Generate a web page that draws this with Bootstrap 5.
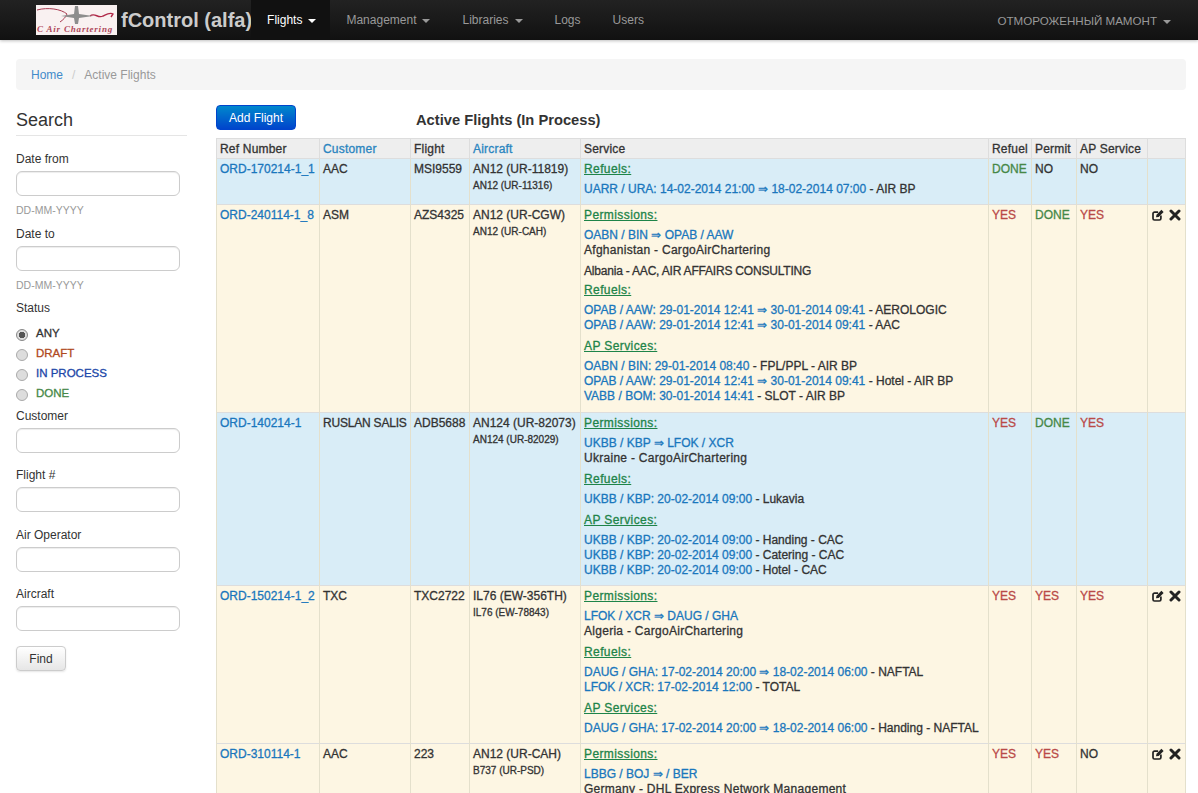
<!DOCTYPE html>
<html lang="en">
<head>
    <meta charset="UTF-8">
    <meta name="viewport" content="width=device-width, initial-scale=1.0">
    <title>fControl (alfa) - Active Flights</title>
    <link href="https://cdn.jsdelivr.net/npm/bootstrap@5.3.3/dist/css/bootstrap.min.css" rel="stylesheet">
    <style>
        html, body { height: 793px; overflow: hidden; }
        body { font-family: "Liberation Sans", Arial, sans-serif; font-size: 12px; line-height: 15px; color: #333; background: #fff; }

        /* top bar */
        .top-bar { height: 40px; padding: 0 11px 0 36px; background: linear-gradient(#222, #111); box-shadow: 0 1px 3px rgba(0,0,0,.25); flex-wrap: nowrap; --bs-navbar-nav-link-padding-x: 16px; }
        .top-bar .navbar-brand { margin: 0 -1px 0 0; padding: 0; font-size: 20px; line-height: 24px; font-weight: 700; color: #ccc; display: flex; align-items: center; }
        .brand-logo { width: 81px; height: 30px; margin-right: 4px; display: block; }
        .top-bar .nav-link { height: 40px; padding-top: 13px; padding-bottom: 0; font-size: 12px; line-height: 15px; color: #999; }
        .top-bar .navbar-nav .nav-link.active { color: #fff; background: #111; padding-right: 14px; }
        .top-bar .dropdown-toggle::after { margin-left: 6px; vertical-align: 1px; border-top-width: 4px; border-left-width: 4px; border-right-width: 4px; }
        .user-link { font-size: 11.6px !important; }

        /* breadcrumb */
        .crumbs { margin: 19px 12px 15px 16px; padding: 9px 15px 7px; height: 31px; background: #f5f5f5; border-radius: 4px; --bs-breadcrumb-divider-color: #ccc; --bs-breadcrumb-item-active-color: #999; --bs-breadcrumb-item-padding-x: 9px; }
        .crumbs a { color: #428bca; text-decoration: none; }

        /* search column */
        .search-col { width: 216px; flex: none; padding-left: 16px; }
        .search-title { width: 171px; margin: 5px 0 16px; padding-bottom: 5px; height: 26px; font-size: 18px; line-height: 20px; font-weight: 400; border-bottom: 1px solid #e5e5e5; }
        .search-col .form-label { display: block; margin-bottom: 4px; }
        .search-col .form-control { width: 164px; height: 25px; min-height: 0; padding: 2px 6px; font-size: 12px; border-color: #ccc; box-shadow: inset 0 1px 1px rgba(0,0,0,.075); margin-bottom: 15px; }
        .search-col .form-control.date-input { margin-bottom: 7px; }
        .search-col .form-control.wide-gap { margin-bottom: 16px; }
        .search-hint { display: block; margin-bottom: 9px; font-size: 10.5px; color: #999; }
        .status-label { margin-top: -1px; }
        .status-list { margin: 7px 0 0; }
        .status-item { display: flex; align-items: center; height: 20px; padding: 0; margin: 0; min-height: 0; font-size: 11.5px; -webkit-text-stroke: .3px; }
        .status-item .form-check-input { width: 12px; height: 12px; margin: 3px 8px 0 0; float: none; flex: none; border-color: #aaa; background-color: #ddd; }
        .status-item .form-check-input:checked { background-color: #ddd; border-color: #888; background-image: radial-gradient(circle, #555 0, #555 3px, transparent 3.5px); }
        .status-any { color: #333; }
        .status-draft { color: #b0491e; }
        .status-process { color: #1c47a8; }
        .status-done { color: #468847; }
        .customer-label { margin-top: 6px; }
        .find-btn { display: block; width: 50px; height: 25px; padding: 0; font-size: 12px; color: #333; border: 1px solid #ccc; border-radius: 4px; background: linear-gradient(#fff, #e6e6e6); box-shadow: 0 1px 2px rgba(0,0,0,.1); }

        /* flights table */
        .flights-col { width: 970px; flex: none; }
        .add-btn { width: 80px; height: 25px; padding: 0; font-size: 12px; color: #fff; border: 1px solid #0044cc; border-radius: 4px; background: linear-gradient(#0088cc, #0044cc); }
        .flights-title { margin: 5px 0 0 120px; font-size: 14.7px; line-height: 20px; font-weight: 700; }
        .title-row { height: 33px; }
        .flights-table { table-layout: fixed; width: 969px; margin: 0; font-size: 12px; line-height: 15px; --bs-table-border-color: #ddd; color: #333; border-collapse: collapse; -webkit-text-stroke: .3px; }
        .flights-table > thead > tr > th { padding: 3px 3px 1px; height: 20px; font-weight: 400; letter-spacing: .2px; background: #eee; color: #333; border-color: #ddd; white-space: nowrap; }
        .flights-table > tbody > tr > td { padding: 3px 3px 1px; color: #333; border-color: #e4e0cc; white-space: nowrap; }
        .flights-table a { color: #1a77bd; text-decoration: none; }
        .flights-table th a { color: #2a85c0; }
        .col-ref { width: 103px; }
        .col-customer { width: 91px; }
        .col-flight { width: 59px; }
        .col-aircraft { width: 111px; }
        .col-service { width: 408px; }
        .col-refuel { width: 43px; }
        .col-permit { width: 45px; }
        .col-ap { width: 71px; }
        .col-actions { width: 38px; }
        .row-blue > td { background-color: #d9edf7 !important; }
        .row-cream > td { background-color: #fdf6e3 !important; }
        .plane-small { display: block; margin-top: 2px; font-size: 10px; line-height: 13px; }
        .service-head { margin-bottom: 5px; color: #1e8449; text-decoration: underline; letter-spacing: .4px; }
        .service-group { margin-bottom: 6px; }
        .service-group.tight { margin-bottom: 4px; }
        .service-group.loose { margin-bottom: 7px; }
        .route { color: #1a77bd; }
        .text-wide { letter-spacing: .28px; }
        .text-caps { letter-spacing: -.2px; }
        .st-yes { color: #b94a48 !important; }
        .st-done { color: #468847 !important; }
        .row-icons { display: flex; gap: 5px; padding: 1px 0 0 1px; }
        .row-icons svg { display: block; width: 12px; height: 12px; }
    </style>
</head>
<body>
    <nav class="navbar navbar-expand top-bar">
        <a class="navbar-brand" href="#">
            <svg class="brand-logo" viewBox="0 0 81 30">
                <rect width="81" height="30" fill="#f9f1f1"/>
                <path d="M1 5 C12 2 25 4 31 9 C30 12 27 15 24 17" fill="none" stroke="#a83a50" stroke-width="1"/>
                <path d="M54 11 C59 7 62 14 67 11 C71 9 74 7 77 9 L75 12" fill="none" stroke="#b02848" stroke-width="1.4"/>
                <path d="M39 1 L42 1 L43 9 L57 11 L43 13 L42 19 L39 19 L38 13 L25 11 L38 9 Z" fill="#8d8d8d"/>
                <text x="1" y="27" font-family="Liberation Serif, serif" font-style="italic" font-weight="700" font-size="9" letter-spacing=".8" fill="#b0475a">C Air Chartering</text>
            </svg>
            fControl (alfa)
        </a>
        <ul class="navbar-nav">
            <li class="nav-item dropdown"><a class="nav-link active dropdown-toggle" href="#">Flights</a></li>
            <li class="nav-item dropdown"><a class="nav-link dropdown-toggle" href="#">Management</a></li>
            <li class="nav-item dropdown"><a class="nav-link dropdown-toggle" href="#">Libraries</a></li>
            <li class="nav-item"><a class="nav-link" href="#">Logs</a></li>
            <li class="nav-item"><a class="nav-link" href="#">Users</a></li>
        </ul>
        <ul class="navbar-nav ms-auto">
            <li class="nav-item dropdown"><a class="nav-link dropdown-toggle user-link" href="#">ОТМОРОЖЕННЫЙ МАМОНТ</a></li>
        </ul>
    </nav>

    <ol class="breadcrumb crumbs">
        <li class="breadcrumb-item"><a href="#">Home</a></li>
        <li class="breadcrumb-item active">Active Flights</li>
    </ol>

    <div class="d-flex">
        <form class="search-col">
            <h5 class="search-title">Search</h5>
            <label class="form-label">Date from</label>
            <input type="text" class="form-control date-input">
            <span class="search-hint">DD-MM-YYYY</span>
            <label class="form-label">Date to</label>
            <input type="text" class="form-control date-input">
            <span class="search-hint">DD-MM-YYYY</span>
            <label class="form-label status-label mb-0">Status</label>
            <div class="status-list">
                <label class="form-check status-item status-any"><input class="form-check-input" type="radio" name="status" checked>ANY</label>
                <label class="form-check status-item status-draft"><input class="form-check-input" type="radio" name="status">DRAFT</label>
                <label class="form-check status-item status-process"><input class="form-check-input" type="radio" name="status">IN PROCESS</label>
                <label class="form-check status-item status-done"><input class="form-check-input" type="radio" name="status">DONE</label>
            </div>
            <label class="form-label customer-label">Customer</label>
            <input type="text" class="form-control">
            <label class="form-label">Flight #</label>
            <input type="text" class="form-control wide-gap">
            <label class="form-label">Air Operator</label>
            <input type="text" class="form-control">
            <label class="form-label">Aircraft</label>
            <input type="text" class="form-control">
            <button type="button" class="btn find-btn">Find</button>
        </form>

        <div class="flights-col">
            <div class="d-flex title-row">
                <button type="button" class="btn add-btn">Add Flight</button>
                <h5 class="flights-title">Active Flights (In Process)</h5>
            </div>
            <table class="table table-bordered flights-table">
                <colgroup>
                    <col class="col-ref"><col class="col-customer"><col class="col-flight"><col class="col-aircraft"><col class="col-service"><col class="col-refuel"><col class="col-permit"><col class="col-ap"><col class="col-actions">
                </colgroup>
                <thead>
                    <tr>
                        <th>Ref Number</th><th><a href="#">Customer</a></th><th>Flight</th><th><a href="#">Aircraft</a></th><th>Service</th><th>Refuel</th><th>Permit</th><th>AP Service</th><th></th>
                    </tr>
                </thead>
                <tbody>
                    <tr class="row-blue">
                        <td><a href="#">ORD-170214-1_1</a></td><td>AAC</td><td>MSI9559</td>
                        <td>AN12 (UR-11819)<span class="plane-small">AN12 (UR-11316)</span></td>
                        <td>
                            <div class="service-head">Refuels:</div>
                            <div class="service-group"><span class="route">UARR / URA: 14-02-2014 21:00 ⇒ 18-02-2014 07:00</span> - AIR BP</div>
                        </td>
                        <td class="st-done">DONE</td><td>NO</td><td>NO</td><td></td>
                    </tr>
                    <tr class="row-cream">
                        <td><a href="#">ORD-240114-1_8</a></td><td>ASM</td><td>AZS4325</td>
                        <td>AN12 (UR-CGW)<span class="plane-small">AN12 (UR-CAH)</span></td>
                        <td>
                            <div class="service-head">Permissions:</div>
                            <div class="service-group"><span class="route">OABN / BIN ⇒ OPAB / AAW</span><br><span class="text-wide">Afghanistan - CargoAirChartering</span></div>
                            <div class="service-group tight text-caps">Albania - AAC, AIR AFFAIRS CONSULTING</div>
                            <div class="service-head">Refuels:</div>
                            <div class="service-group"><span class="route">OPAB / AAW: 29-01-2014 12:41 ⇒ 30-01-2014 09:41</span> - AEROLOGIC<br><span class="route">OPAB / AAW: 29-01-2014 12:41 ⇒ 30-01-2014 09:41</span> - AAC</div>
                            <div class="service-head">AP Services:</div>
                            <div class="service-group loose"><span class="route">OABN / BIN: 29-01-2014 08:40</span> - FPL/PPL - AIR BP<br><span class="route">OPAB / AAW: 29-01-2014 12:41 ⇒ 30-01-2014 09:41</span> - Hotel - AIR BP<br><span class="route">VABB / BOM: 30-01-2014 14:41</span> - SLOT - AIR BP</div>
                        </td>
                        <td class="st-yes">YES</td><td class="st-done">DONE</td><td class="st-yes">YES</td>
                        <td>
                            <div class="row-icons">
                                <svg viewBox="0 0 12 12"><path d="M8.9 6.5v3a1.5 1.5 0 0 1-1.5 1.5H2.5A1.5 1.5 0 0 1 1 9.5V4.6a1.5 1.5 0 0 1 1.5-1.5h3.6" fill="none" stroke="#222" stroke-width="1.7"/><path d="M4.5 5.7 9.4.8 11.6 3 6.7 7.9 4 8.3Z" fill="#222"/></svg>
                                <svg viewBox="0 0 12 12"><path d="M2 2 10 10M10 2 2 10" stroke="#222" stroke-width="3" stroke-linecap="round"/></svg>
                            </div>
                        </td>
                    </tr>
                    <tr class="row-blue">
                        <td><a href="#">ORD-140214-1</a></td><td class="text-caps">RUSLAN SALIS</td><td>ADB5688</td>
                        <td>AN124 (UR-82073)<span class="plane-small">AN124 (UR-82029)</span></td>
                        <td>
                            <div class="service-head">Permissions:</div>
                            <div class="service-group"><span class="route">UKBB / KBP ⇒ LFOK / XCR</span><br><span class="text-wide">Ukraine - CargoAirChartering</span></div>
                            <div class="service-head">Refuels:</div>
                            <div class="service-group"><span class="route">UKBB / KBP: 20-02-2014 09:00</span> - Lukavia</div>
                            <div class="service-head">AP Services:</div>
                            <div class="service-group"><span class="route">UKBB / KBP: 20-02-2014 09:00</span> - Handing - CAC<br><span class="route">UKBB / KBP: 20-02-2014 09:00</span> - Catering - CAC<br><span class="route">UKBB / KBP: 20-02-2014 09:00</span> - Hotel - CAC</div>
                        </td>
                        <td class="st-yes">YES</td><td class="st-done">DONE</td><td class="st-yes">YES</td><td></td>
                    </tr>
                    <tr class="row-cream">
                        <td><a href="#">ORD-150214-1_2</a></td><td>TXC</td><td>TXC2722</td>
                        <td>IL76 (EW-356TH)<span class="plane-small">IL76 (EW-78843)</span></td>
                        <td>
                            <div class="service-head">Permissions:</div>
                            <div class="service-group"><span class="route">LFOK / XCR ⇒ DAUG / GHA</span><br><span class="text-wide">Algeria - CargoAirChartering</span></div>
                            <div class="service-head">Refuels:</div>
                            <div class="service-group"><span class="route">DAUG / GHA: 17-02-2014 20:00 ⇒ 18-02-2014 06:00</span> - NAFTAL<br><span class="route">LFOK / XCR: 17-02-2014 12:00</span> - TOTAL</div>
                            <div class="service-head">AP Services:</div>
                            <div class="service-group"><span class="route">DAUG / GHA: 17-02-2014 20:00 ⇒ 18-02-2014 06:00</span> - Handing - NAFTAL</div>
                        </td>
                        <td class="st-yes">YES</td><td class="st-yes">YES</td><td class="st-yes">YES</td>
                        <td>
                            <div class="row-icons">
                                <svg viewBox="0 0 12 12"><path d="M8.9 6.5v3a1.5 1.5 0 0 1-1.5 1.5H2.5A1.5 1.5 0 0 1 1 9.5V4.6a1.5 1.5 0 0 1 1.5-1.5h3.6" fill="none" stroke="#222" stroke-width="1.7"/><path d="M4.5 5.7 9.4.8 11.6 3 6.7 7.9 4 8.3Z" fill="#222"/></svg>
                                <svg viewBox="0 0 12 12"><path d="M2 2 10 10M10 2 2 10" stroke="#222" stroke-width="3" stroke-linecap="round"/></svg>
                            </div>
                        </td>
                    </tr>
                    <tr class="row-cream">
                        <td><a href="#">ORD-310114-1</a></td><td>AAC</td><td>223</td>
                        <td>AN12 (UR-CAH)<span class="plane-small">B737 (UR-PSD)</span></td>
                        <td>
                            <div class="service-head">Permissions:</div>
                            <div class="service-group"><span class="route">LBBG / BOJ ⇒ / BER</span><br><span class="text-wide">Germany - DHL Express Network Management</span></div>
                        </td>
                        <td class="st-yes">YES</td><td class="st-yes">YES</td><td>NO</td>
                        <td>
                            <div class="row-icons">
                                <svg viewBox="0 0 12 12"><path d="M8.9 6.5v3a1.5 1.5 0 0 1-1.5 1.5H2.5A1.5 1.5 0 0 1 1 9.5V4.6a1.5 1.5 0 0 1 1.5-1.5h3.6" fill="none" stroke="#222" stroke-width="1.7"/><path d="M4.5 5.7 9.4.8 11.6 3 6.7 7.9 4 8.3Z" fill="#222"/></svg>
                                <svg viewBox="0 0 12 12"><path d="M2 2 10 10M10 2 2 10" stroke="#222" stroke-width="3" stroke-linecap="round"/></svg>
                            </div>
                        </td>
                    </tr>
                </tbody>
            </table>
        </div>
    </div>

    <script src="https://cdn.jsdelivr.net/npm/bootstrap@5.3.3/dist/js/bootstrap.bundle.min.js"></script>
</body>
</html>
